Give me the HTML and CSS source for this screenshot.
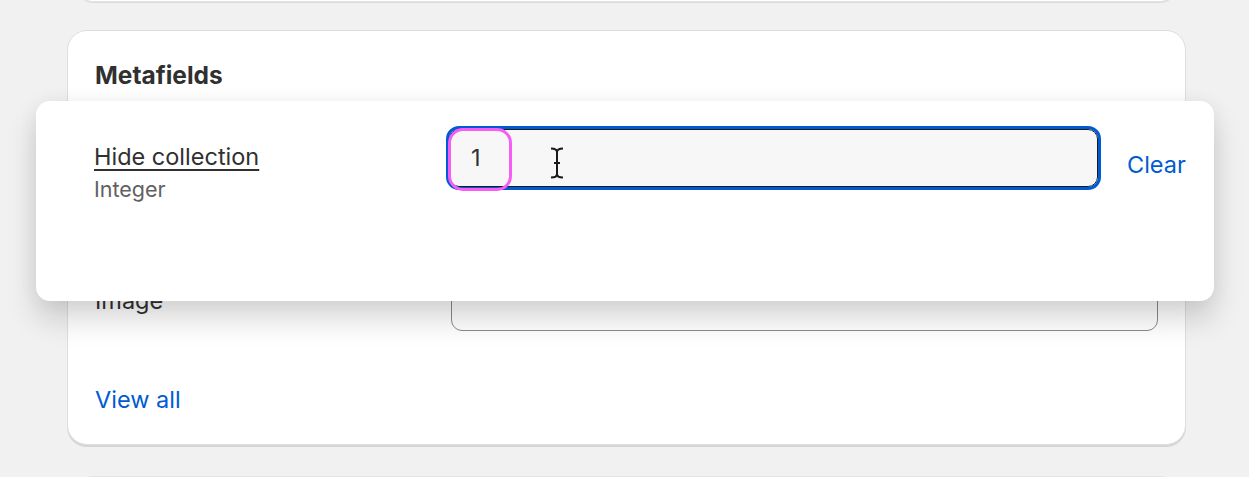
FILE: index.html
```html
<!DOCTYPE html>
<html lang="en">
  <head>
    <meta charset="UTF-8" />
    <title>Metafields</title>
    <link rel="stylesheet" href="styles.css">
  </head>
  <body>
    <div class="page">
      <div class="card-stub top"></div>

      <section class="card">
        <h2 class="card-title">Metafields</h2>
        <div class="field-list">
          <div class="field-row">
            <span class="field-name">Hide collection</span>
            <div class="field-box"></div>
          </div>
          <div class="field-row">
            <span class="field-name">Image</span>
            <div class="field-box"></div>
          </div>
        </div>
        <a class="link view-all" href="#">View all</a>
      </section>

      <div class="card-stub bottom"></div>

      <!-- Editing popover over the card -->
      <div class="popover">
        <div class="pop-label">
          <span class="pop-name">Hide collection</span>
          <span class="pop-type">Integer</span>
        </div>
        <div class="input-wrap">
          <div class="input-field">1</div>
          <span class="highlight"></span>
          <svg class="ibeam" width="16" height="32" viewBox="0 0 16 32">
            <path d="M2 1.5 Q8 1.5 8 5 Q8 1.5 14 1.5 M8 5 V27 Q8 30.5 2 30.5 M8 27 Q8 30.5 14 30.5 M5 16 H11" fill="none" stroke="#1a1a1a" stroke-width="2" />
          </svg>
        </div>
        <a class="link clear" href="#">Clear</a>
      </div>
    </div>
  </body>
</html>
```

FILE: styles.css
```css
* {
  box-sizing: border-box;
  margin: 0;
  padding: 0;
}

body {
  font-family: Inter, "Noto Sans", sans-serif;
  background-color: #f1f1f1;
  color: #303030;
  overflow: hidden;
}

.page {
  position: relative;
  height: 477px;
  display: flex;
  flex-direction: column;
  align-items: flex-start;
}

/* Cards around the main one */
.card-stub {
  margin-left: 78px;
  width: 1097px;
  height: 20px;
  background-color: #fff;
  border: 1px solid #e3e3e3;
  flex-shrink: 0;
}

.card-stub.top {
  margin-top: -18px;
  border-radius: 0 0 14px 14px;
  box-shadow: 0 1px 0 #dcdcdc;
}

.card-stub.bottom {
  margin-top: 31px;
  border-radius: 14px 14px 0 0;
}

/* Main card */
.card {
  margin-top: 28px;
  margin-left: 67px;
  width: 1119px;
  height: 415px;
  background-color: #fff;
  border: 1px solid #dedede;
  border-radius: 20px;
  box-shadow: 0 2px 0 #d6d6d6;
  padding: 27px 27px 0 27px;
  display: flex;
  flex-direction: column;
  align-items: flex-start;
  flex-shrink: 0;
}

.card-title {
  font-size: 24.5px;
  font-weight: 700;
  color: #303030;
  line-height: 34px;
}

.field-list {
  align-self: stretch;
  display: flex;
  flex-direction: column;
  gap: 24px;
  margin-top: 99px;
}

.field-row {
  display: grid;
  grid-template-columns: 356px 1fr;
  align-items: end;
  height: 58px;
  font-size: 23.5px;
}

.field-name {
  line-height: 32px;
  padding-bottom: 14px;
}

.field-box {
  height: 58px;
  border: 1px solid #8a8a8a;
  border-radius: 11px;
}

.link {
  color: #005bd3;
  text-decoration: none;
  font-size: 23.5px;
  line-height: 30px;
}

.view-all {
  margin-top: 54px;
}

/* Popover */
.popover {
  position: absolute;
  left: 36px;
  top: 101px;
  width: 1178px;
  height: 200px;
  background-color: #fff;
  border-radius: 14px;
  box-shadow: 0 18px 30px rgba(0, 0, 0, 0.16), 0 0 20px rgba(0, 0, 0, 0.05);
  padding: 25px 29px 0 58px;
  display: grid;
  grid-template-columns: 326px 655px auto;
  column-gap: 26px;
  align-items: start;
}

.pop-label {
  display: flex;
  flex-direction: column;
  align-items: flex-start;
  padding-top: 15px;
}

.pop-name {
  font-size: 23.5px;
  color: #303030;
  text-decoration: underline;
  text-underline-offset: 4px;
  text-decoration-thickness: 2px;
  line-height: 32px;
}

.pop-type {
  font-size: 21.5px;
  color: #616161;
  line-height: 32px;
}

.input-wrap {
  position: relative;
  padding: 3px;
  height: 64px;
}

.input-field {
  height: 58px;
  background-color: #f7f7f7;
  border: 1px solid #1a1a1a;
  border-radius: 10px;
  outline: 3px solid #005bd3;
  outline-offset: 0;
  font-size: 23.5px;
  line-height: 56px;
  padding-left: 21px;
  color: #303030;
}

.highlight {
  position: absolute;
  left: 2px;
  top: 2px;
  width: 64px;
  height: 63px;
  border: 3px solid #f75cf7;
  border-radius: 15px;
}

.ibeam {
  position: absolute;
  left: 103px;
  top: 21px;
}

.clear {
  padding-top: 24px;
}
```
